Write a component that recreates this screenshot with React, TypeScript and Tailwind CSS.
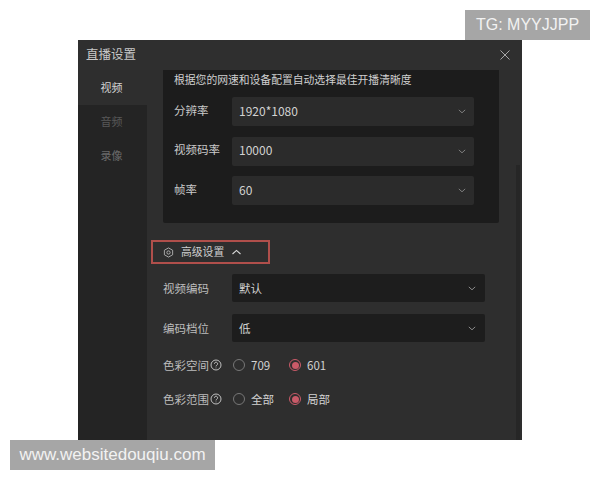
import React from "react";

const font = { fontFamily: '"Noto Sans CJK SC", "Noto Sans", sans-serif' };

function Chevron({ className }: { className: string }) {
  return (
    <svg viewBox="0 0 10 6" className={className} fill="none" stroke="currentColor" strokeWidth="1.1">
      <path d="M1 1l4 3.6L9 1" />
    </svg>
  );
}

function Help() {
  return (
    <svg viewBox="0 0 12 12" className="w-[12px] h-[12px] text-[#cfcfcf]" fill="none" stroke="currentColor" strokeWidth="0.9">
      <circle cx="6" cy="6" r="5" />
      <path d="M4.4 4.8a1.6 1.6 0 1 1 2.5 1.3c-.6.4-.9.7-.9 1.3" />
      <path d="M6 8.6v.7" />
    </svg>
  );
}

function TopRow({ label, value }: { label: string; value: string }) {
  return (
    <div className="flex items-center h-[29px]">
      <span className="w-[58px] text-[11.5px] text-[#c9c9c9] pb-[2px]">{label}</span>
      <div className="w-[242px] h-full rounded-[2px] bg-[#2b2b2b] flex items-center justify-between pl-[7px] pr-[8px]">
        <span className="text-[12px] text-[#d2d2d2] pb-[2px]">{value}</span>
        <Chevron className="w-[8px] h-[5px] text-[#8a8a8a]" />
      </div>
    </div>
  );
}

function LowRow({ label, value }: { label: string; value: string }) {
  return (
    <div className="flex items-center h-[28px]">
      <span className="w-[69px] text-[11.5px] text-[#bdbdbd] pt-[1px]">{label}</span>
      <div className="w-[253px] h-full rounded-[2px] bg-[#1d1d1d] flex items-center justify-between pl-[7px] pr-[9px]">
        <span className="text-[11.5px] text-[#d2d2d2] pt-[1px]">{value}</span>
        <Chevron className="w-[8px] h-[5px] text-[#9a9a9a]" />
      </div>
    </div>
  );
}

function Radio({ label, on, width }: { label: string; on?: boolean; width: string }) {
  return (
    <div className={`flex items-center gap-[6px] ${width}`}>
      {on ? (
        <span className="w-[12px] h-[12px] rounded-full border border-[#c95a68] flex items-center justify-center">
          <span className="w-[7px] h-[7px] rounded-full bg-[#c95a68]" />
        </span>
      ) : (
        <span className="w-[12px] h-[12px] rounded-full border border-[#777777]" />
      )}
      <span className="text-[11.5px] text-[#d2d2d2] pt-[1px]">{label}</span>
    </div>
  );
}

function RadioRow({ label, a, b }: { label: string; a: string; b: string }) {
  return (
    <div className="flex items-center h-[20px]">
      <div className="w-[70px] flex items-center gap-[1px]">
        <span className="text-[11.5px] text-[#bdbdbd] pt-[1px]">{label}</span>
        <Help />
      </div>
      <Radio label={a} width="w-[56px]" />
      <Radio label={b} on width="w-[60px]" />
    </div>
  );
}

export default function App() {
  return (
    <div className="relative w-[600px] h-[480px] bg-white overflow-hidden" style={font}>
      <div className="pt-[40px] pl-[78px]">
        <div className="w-[444px] h-[400px] bg-[#2e2e2e] flex flex-col">
          <div className="h-[30px] shrink-0 flex items-center justify-between pl-[8px] pr-[12px] bg-[#2f2f2f]">
            <span className="text-[12.5px] text-[#c8c8c8] pb-[1px]">直播设置</span>
            <svg viewBox="0 0 10 10" className="w-[10px] h-[10px] text-[#b5b5b5]" fill="none" stroke="currentColor" strokeWidth="0.9">
              <path d="M.5.5l9 9M9.5.5l-9 9" />
            </svg>
          </div>
          <div className="flex-1 flex min-h-0">
            <div className="w-[69px] bg-[#242424] flex flex-col">
              <div className="h-[35px] bg-[#2e2e2e] flex items-center justify-center pr-[2px] text-[11px] text-[#d4d4d4]">视频</div>
              <div className="h-[34px] flex items-center justify-center pr-[2px] pb-[1px] text-[11px] text-[#585858]">音频</div>
              <div className="h-[34px] flex items-center justify-center pr-[2px] pb-[1px] text-[11px] text-[#6a6a6a]">录像</div>
            </div>
            <div className="flex-1 flex">
              <div className="w-[369px]">
                <div className="ml-[16px] w-[336px] h-[153px] bg-[#1c1c1c] rounded-b-[2px] pl-[11px]">
                  <div className="h-[20px] flex items-center pb-[1px] text-[10.8px] text-[#d0d0d0]">根据您的网速和设备配置自动选择最佳开播清晰度</div>
                  <div className="pt-[7px] flex flex-col gap-[10.5px]">
                    <TopRow label="分辨率" value="1920*1080" />
                    <TopRow label="视频码率" value="10000" />
                    <TopRow label="帧率" value="60" />
                  </div>
                </div>
                <div className="ml-[4px] mt-[17px] w-[119px] h-[24px] border-2 border-[#b04f4b] flex items-center pl-[10px]">
                  <svg viewBox="0 0 12 12" className="w-[11px] h-[11px] text-[#c0c0c0]" fill="none" stroke="currentColor" strokeWidth="0.9">
                    <path d="M6 1l4.500 2.500v5L6 11 1.500 8.500v-5z" />
                    <circle cx="6" cy="6" r="1.800" />
                  </svg>
                  <span className="ml-[7px] text-[10.8px] text-[#cfcfcf] pb-[2px]">高级设置</span>
                  <Chevron className="ml-[7px] w-[11px] h-[6px] text-[#d8d8d8] rotate-180" />
                </div>
                <div className="ml-[16px] mt-[10px] flex flex-col gap-[12px]">
                  <LowRow label="视频编码" value="默认" />
                  <LowRow label="编码档位" value="低" />
                </div>
                <div className="ml-[16px] mt-[13px] flex flex-col gap-[14px]">
                  <RadioRow label="色彩空间" a="709" b="601" />
                  <RadioRow label="色彩范围" a="全部" b="局部" />
                </div>
              </div>
              <div className="w-[6px] pt-[95px]">
                <div className="w-[4px] h-full bg-[#262626]" />
              </div>
            </div>
          </div>
        </div>
      </div>
      <div className="absolute left-[465px] top-[10px] w-[125px] h-[30px] bg-[#a6a6a6] flex items-center justify-center text-[16px] text-[#f2f2f2] font-light" style={{ fontFamily: '"Liberation Sans", sans-serif' }}>
        TG: MYYJJPP
      </div>
      <div className="absolute left-[10px] top-[440px] w-[205px] h-[30px] bg-[#a6a6a6] flex items-center justify-center text-[17px] text-[#f2f2f2]" style={{ fontFamily: '"Liberation Sans", sans-serif' }}>
        www.websitedouqiu.com
      </div>
    </div>
  );
}
